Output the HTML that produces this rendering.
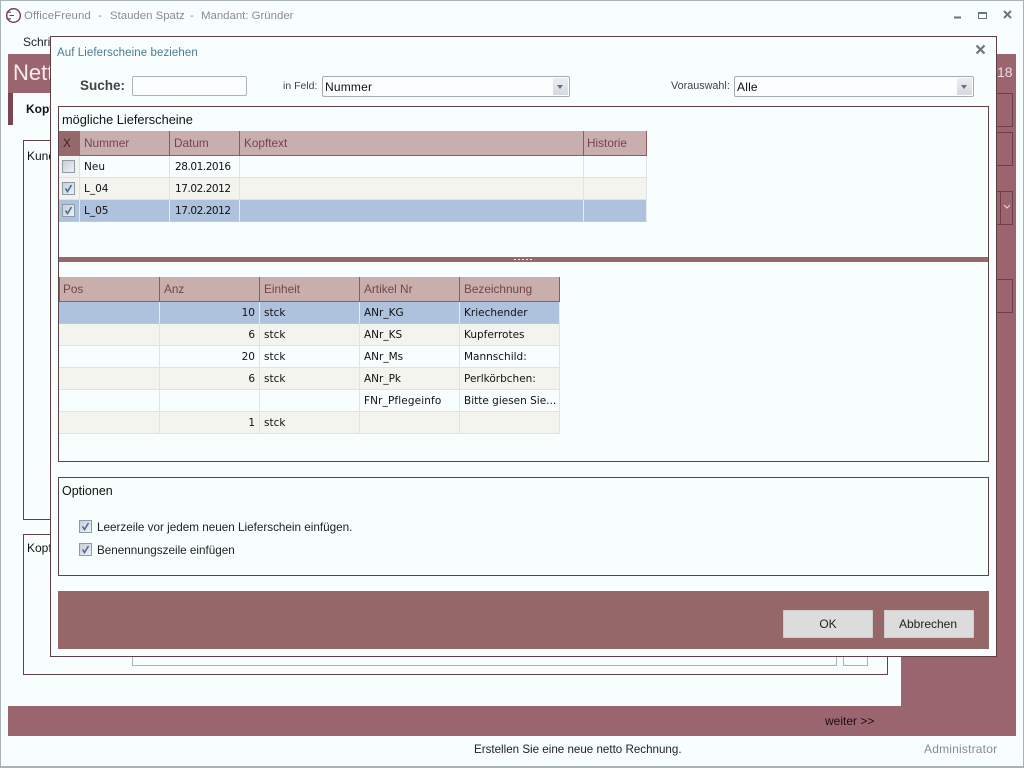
<!DOCTYPE html>
<html><head><meta charset="utf-8"><style>
html,body{margin:0;padding:0;width:1024px;height:768px;overflow:hidden;background:#f8fefd}
body{position:relative;font-family:"Liberation Sans",sans-serif;font-size:12px;color:#111}
.a{position:absolute;box-sizing:border-box}
.t{position:absolute;white-space:nowrap;line-height:14px}
.b{border:1px solid #5f4246}
.hd{position:absolute;box-sizing:border-box;background:#c9aeae;color:#76444a;border-right:1px solid #8b5e62;border-bottom:1px solid #8b5e62;height:25px;line-height:24px;padding-left:4px;font-size:11.8px}
.c{position:absolute;box-sizing:border-box;height:22px;line-height:23px;padding:0 4px;border-right:1px solid #dfe3e2;border-bottom:1px solid #dfe3e2;font-family:"DejaVu Sans",sans-serif;font-size:10.5px;color:#111;white-space:nowrap}
.d{letter-spacing:-.45px;padding-left:5px}
.w{background:#f8fefd}.g{background:#f4f4ef}.s{background:#aec2dd;border-right-color:#e4ecf3;border-bottom-color:#b8cade}
.r{text-align:right}
.cb{position:absolute;width:13px;height:13px;box-sizing:border-box;border:1px solid #8e9aa5;background:linear-gradient(135deg,#c9cfd7,#eef1f4)}
.sel{position:absolute;box-sizing:border-box;height:21px;border:1px solid #a6adb1;border-radius:2px;background:#fbfefe;line-height:20px;padding-left:2px;font-size:12px;letter-spacing:.2px}
.sel i{position:absolute;right:1px;top:1px;width:15px;height:17px;background:linear-gradient(#eceef2,#d5d8e2)}
.sel i:after{content:"";position:absolute;left:4px;top:7px;border:3px solid transparent;border-top:4px solid #6b6f75;border-bottom:0}
.btn{position:absolute;box-sizing:border-box;background:#dcdcdc;border:1px solid #d0cccc;text-align:center;height:28px;line-height:26px;top:610px;font-size:12px;color:#222}
</style></head><body>
<div class="a" style="left:0;top:0;width:1024px;height:768px;border:1px solid #a9b4b8;border-width:1px 1px 2px 1px"></div>

<svg class="a" style="left:5px;top:7px" width="17" height="17" viewBox="0 0 17 17"><circle cx="8.5" cy="8.5" r="6.8" fill="none" stroke="#6e3a58" stroke-width="1.4"/><path d="M4.5 8.5H9M6 5.2 H1.5 M6 11.8H1.5" stroke="#6e3a58" stroke-width="1.1" fill="none"/></svg>
<div class="t" style="left:24px;top:9px;color:#8c8c8c;font-size:11.4px;letter-spacing:.1px">OfficeFreund</div>
<div class="t" style="left:98px;top:9px;color:#8c8c8c;font-size:11.4px">-</div>
<div class="t" style="left:110px;top:9px;color:#8c8c8c;font-size:11.4px">Stauden Spatz</div>
<div class="t" style="left:190px;top:9px;color:#8c8c8c;font-size:11.4px">-</div>
<div class="t" style="left:201px;top:9px;color:#8c8c8c;font-size:11.4px">Mandant: Gründer</div>
<svg class="a" style="left:950px;top:8px" width="70" height="16" viewBox="0 0 70 16"><path d="M4 9.5h7" stroke="#69767c" stroke-width="2"/><rect x="28.5" y="4.5" width="8" height="6" fill="none" stroke="#69767c"/><path d="M28 5h9" stroke="#69767c" stroke-width="2"/><path d="M54 3l7 7M61 3l-7 7" stroke="#69767c" stroke-width="2"/></svg>
<div class="t" style="left:23px;top:35px;font-size:12px;color:#222">Schrift</div>

<div class="a" style="left:8px;top:54px;width:1008px;height:39px;background:#9b6570"></div>
<div class="t" style="left:13px;top:60px;font-size:22px;line-height:26px;color:#f4ecee">Netto</div>
<div class="t" style="left:997px;top:65px;font-size:14px;color:#e9dcdf">18</div>
<div class="a" style="left:8px;top:93px;width:5px;height:32px;background:#7c4452"></div>
<div class="t" style="left:26px;top:102px;font-weight:bold;font-size:12px;color:#111">Kopf</div>
<div class="a" style="left:901px;top:93px;width:115px;height:613px;background:#9b6570"></div>
<div class="a" style="left:8px;top:706px;width:1008px;height:30px;background:#9b6570"></div>
<div class="a" style="left:960px;top:93px;width:53px;height:34px;border:1px solid #6e3f49"></div>
<div class="a" style="left:960px;top:132px;width:53px;height:34px;border:1px solid #6e3f49"></div>
<div class="a" style="left:960px;top:191px;width:53px;height:34px;border:1px solid #6e3f49"></div>
<div class="a" style="left:1000px;top:191px;width:1px;height:34px;background:#6e3f49"></div>
<svg class="a" style="left:1003px;top:204px" width="8" height="6" viewBox="0 0 8 6"><path d="M1 1l3 3 3-3" fill="none" stroke="#e6d8db"/></svg>
<div class="a" style="left:960px;top:279px;width:53px;height:34px;border:1px solid #6e3f49"></div>

<div class="a b" style="left:23px;top:140px;width:865px;height:380px"></div>
<div class="t" style="left:27px;top:149px">Kunde</div>
<div class="a b" style="left:23px;top:534px;width:865px;height:141px"></div>
<div class="t" style="left:27px;top:541px">Kopf</div>
<div class="a" style="left:132px;top:640px;width:705px;height:26px;border:1px solid #a9b4b8"></div>
<div class="a" style="left:843px;top:640px;width:25px;height:26px;border:1px solid #a9b4b8"></div>
<div class="t" style="left:825px;top:714px;font-size:12px;color:#1b0f12">weiter &gt;&gt;</div>

<div class="t" style="left:474px;top:743px;font-size:11.6px;color:#222">Erstellen Sie eine neue netto Rechnung.</div>
<div class="t" style="left:924px;top:742px;font-size:12px;color:#8a8a8a;letter-spacing:.2px">Administrator</div>

<!-- dialog -->
<div class="a" style="left:50px;top:36px;width:947px;height:621px;background:#f8fefd;border:1px solid #5f3f44"></div>
<div class="t" style="left:57px;top:46px;font-size:11.5px;color:#4f7a96;letter-spacing:.08px">Auf Lieferscheine beziehen</div>
<svg class="a" style="left:975px;top:44px" width="11" height="11" viewBox="0 0 11 11"><path d="M1.5 1.5l8 8M9.5 1.5l-8 8" stroke="#69767c" stroke-width="2.2"/></svg>

<div class="t" style="left:80px;top:79px;font-size:13.5px;font-weight:bold;color:#444">Suche:</div>
<div class="a" style="left:132px;top:76px;width:115px;height:20px;border:1px solid #a9b4b8;border-radius:2px;background:#fbfefe"></div>
<div class="t" style="left:283px;top:79px;font-size:10.5px;color:#444">in Feld:</div>
<div class="sel" style="left:322px;top:76px;width:248px">Nummer<i></i></div>
<div class="t" style="left:671px;top:79px;font-size:10.8px;color:#444">Vorauswahl:</div>
<div class="sel" style="left:734px;top:76px;width:240px">Alle<i></i></div>

<div class="a b" style="left:58px;top:106px;width:931px;height:356px"></div>
<div class="t" style="left:62px;top:113px;font-size:12.8px;color:#111">mögliche Lieferscheine</div>

<div class="hd" style="left:59px;top:131px;width:21px;background:#96696b;color:#3b2224;border-color:#96696b">X</div>
<div class="hd" style="left:80px;top:131px;width:90px">Nummer</div>
<div class="hd" style="left:170px;top:131px;width:70px">Datum</div>
<div class="hd" style="left:240px;top:131px;width:344px">Kopftext</div>
<div class="hd" style="left:584px;top:131px;width:63px;padding-left:3px">Historie</div>

<div class="c w" style="left:59px;top:156px;width:21px;background:#f2f4f4"></div>
<div class="c w" style="left:80px;top:156px;width:90px">Neu</div>
<div class="c w d" style="left:170px;top:156px;width:70px">28.01.2016</div>
<div class="c w" style="left:240px;top:156px;width:344px"></div>
<div class="c w" style="left:584px;top:156px;width:63px"></div>
<div class="c g" style="left:59px;top:178px;width:21px"></div>
<div class="c g" style="left:80px;top:178px;width:90px">L_04</div>
<div class="c g d" style="left:170px;top:178px;width:70px">17.02.2012</div>
<div class="c g" style="left:240px;top:178px;width:344px"></div>
<div class="c g" style="left:584px;top:178px;width:63px"></div>
<div class="c s" style="left:59px;top:200px;width:21px"></div>
<div class="c s" style="left:80px;top:200px;width:90px">L_05</div>
<div class="c s d" style="left:170px;top:200px;width:70px">17.02.2012</div>
<div class="c s" style="left:240px;top:200px;width:344px"></div>
<div class="c s" style="left:584px;top:200px;width:63px"></div>
<div class="cb" style="left:62px;top:160px"></div>
<div class="cb" style="left:62px;top:182px"><svg width="11" height="11" viewBox="0 0 11 11" style="display:block"><path d="M2.5 5.5l2 3 4-6.5" fill="none" stroke="#4a6d9c" stroke-width="1.6"/></svg></div>
<div class="cb" style="left:62px;top:204px"><svg width="11" height="11" viewBox="0 0 11 11" style="display:block"><path d="M2.5 5.5l2 3 4-6.5" fill="none" stroke="#4a6d9c" stroke-width="1.6"/></svg></div>

<div class="a" style="left:59px;top:257px;width:929px;height:5px;background:#956869"></div>
<div class="a" style="left:514px;top:259px;width:20px;height:1px;background:repeating-linear-gradient(90deg,#f2eaea 0 2px,#956869 2px 4px)"></div>

<div class="hd" style="left:59px;top:277px;width:101px;border-left:1px solid #8b5e62;padding-left:3px">Pos</div>
<div class="hd" style="left:160px;top:277px;width:100px">Anz</div>
<div class="hd" style="left:260px;top:277px;width:100px">Einheit</div>
<div class="hd" style="left:360px;top:277px;width:100px">Artikel Nr</div>
<div class="hd" style="left:460px;top:277px;width:100px">Bezeichnung</div>

<div class="c s" style="left:59px;top:302px;width:101px"></div><div class="c s r" style="left:160px;top:302px;width:100px">10</div><div class="c s" style="left:260px;top:302px;width:100px">stck</div><div class="c s" style="left:360px;top:302px;width:100px">ANr_KG</div><div class="c s" style="left:460px;top:302px;width:100px">Kriechender</div>
<div class="c g" style="left:59px;top:324px;width:101px"></div><div class="c g r" style="left:160px;top:324px;width:100px">6</div><div class="c g" style="left:260px;top:324px;width:100px">stck</div><div class="c g" style="left:360px;top:324px;width:100px">ANr_KS</div><div class="c g" style="left:460px;top:324px;width:100px">Kupferrotes</div>
<div class="c w" style="left:59px;top:346px;width:101px"></div><div class="c w r" style="left:160px;top:346px;width:100px">20</div><div class="c w" style="left:260px;top:346px;width:100px">stck</div><div class="c w" style="left:360px;top:346px;width:100px">ANr_Ms</div><div class="c w" style="left:460px;top:346px;width:100px">Mannschild:</div>
<div class="c g" style="left:59px;top:368px;width:101px"></div><div class="c g r" style="left:160px;top:368px;width:100px">6</div><div class="c g" style="left:260px;top:368px;width:100px">stck</div><div class="c g" style="left:360px;top:368px;width:100px">ANr_Pk</div><div class="c g" style="left:460px;top:368px;width:100px">Perlkörbchen:</div>
<div class="c w" style="left:59px;top:390px;width:101px"></div><div class="c w r" style="left:160px;top:390px;width:100px"></div><div class="c w" style="left:260px;top:390px;width:100px"></div><div class="c w" style="left:360px;top:390px;width:100px;letter-spacing:.12px">FNr_Pflegeinfo</div><div class="c w" style="left:460px;top:390px;width:100px">Bitte giesen Sie...</div>
<div class="c g" style="left:59px;top:412px;width:101px"></div><div class="c g r" style="left:160px;top:412px;width:100px">1</div><div class="c g" style="left:260px;top:412px;width:100px">stck</div><div class="c g" style="left:360px;top:412px;width:100px"></div><div class="c g" style="left:460px;top:412px;width:100px"></div>

<div class="a b" style="left:58px;top:477px;width:931px;height:99px"></div>
<div class="t" style="left:62px;top:484px;font-size:12.5px;color:#111">Optionen</div>
<div class="cb" style="left:79px;top:520px"><svg width="11" height="11" viewBox="0 0 11 11" style="display:block"><path d="M2.5 5.5l2 3 4-6.5" fill="none" stroke="#4a6d9c" stroke-width="1.6"/></svg></div>
<div class="t" style="left:97px;top:521px;font-size:11.7px;color:#222">Leerzeile vor jedem neuen Lieferschein einfügen.</div>
<div class="cb" style="left:79px;top:543px"><svg width="11" height="11" viewBox="0 0 11 11" style="display:block"><path d="M2.5 5.5l2 3 4-6.5" fill="none" stroke="#4a6d9c" stroke-width="1.6"/></svg></div>
<div class="t" style="left:97px;top:544px;font-size:11.7px;color:#222">Benennungszeile einfügen</div>

<div class="a" style="left:58px;top:591px;width:931px;height:58px;background:#956768"></div>
<div class="btn" style="left:783px;width:90px">OK</div>
<div class="btn" style="left:884px;width:90px;padding-right:2px">Abbrechen</div>
</body></html>
